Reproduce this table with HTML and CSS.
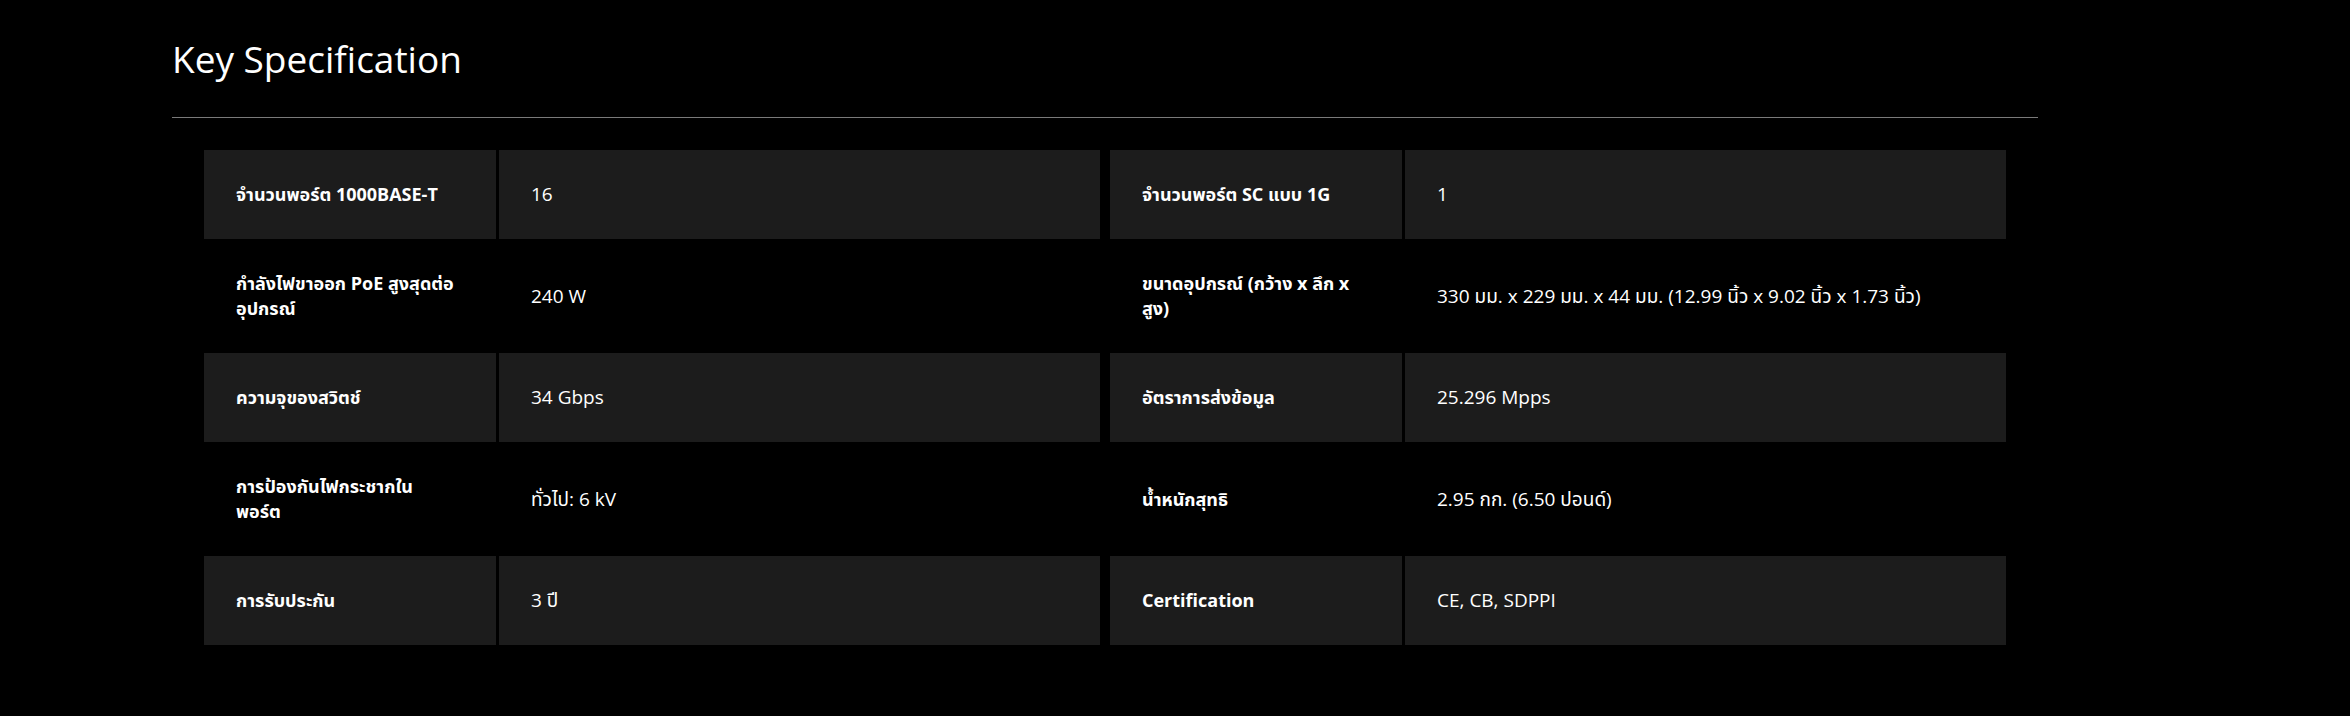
FILE: index.html
```html
<!DOCTYPE html>
<html lang="th">
<head>
<meta charset="utf-8">
<title>Key Specification</title>
<link rel="stylesheet" href="styles.css">
</head>
<body>
<section class="spec">
  <h2 class="spec-title">Key Specification</h2>
  <div class="spec-body">
    <div class="spec-grid">
      <div class="spec-row">
        <div class="pair"><div class="label"><span>จำนวนพอร์ต 1000BASE-T</span></div><div class="value"><span>16</span></div></div>
        <div class="pair"><div class="label"><span>จำนวนพอร์ต SC แบบ 1G</span></div><div class="value"><span>1</span></div></div>
      </div>
      <div class="spec-row">
        <div class="pair"><div class="label"><span>กำลังไฟขาออก PoE สูงสุดต่ออุปกรณ์</span></div><div class="value"><span>240 W</span></div></div>
        <div class="pair"><div class="label"><span>ขนาดอุปกรณ์ (กว้าง x ลึก x สูง)</span></div><div class="value"><span>330 มม. x 229 มม. x 44 มม. (12.99 นิ้ว x 9.02 นิ้ว x 1.73 นิ้ว)</span></div></div>
      </div>
      <div class="spec-row">
        <div class="pair"><div class="label"><span>ความจุของสวิตช์</span></div><div class="value"><span>34 Gbps</span></div></div>
        <div class="pair"><div class="label"><span>อัตราการส่งข้อมูล</span></div><div class="value"><span>25.296 Mpps</span></div></div>
      </div>
      <div class="spec-row">
        <div class="pair"><div class="label"><span>การป้องกันไฟกระชากใน<br>พอร์ต</span></div><div class="value"><span>ทั่วไป: 6 kV</span></div></div>
        <div class="pair"><div class="label"><span>น้ำหนักสุทธิ</span></div><div class="value"><span>2.95 กก. (6.50 ปอนด์)</span></div></div>
      </div>
      <div class="spec-row">
        <div class="pair"><div class="label"><span>การรับประกัน</span></div><div class="value"><span>3 ปี</span></div></div>
        <div class="pair"><div class="label"><span>Certification</span></div><div class="value"><span>CE, CB, SDPPI</span></div></div>
      </div>
    </div>
  </div>
</section>
</body>
</html>
```

FILE: styles.css
```css
html, body {
  margin: 0;
  padding: 0;
  background: #000;
  color: #fff;
  font-family: "Open Sans", "Noto Sans Thai", "Noto Sans", sans-serif;
}

.spec {
  width: 1866px;
  margin-left: 172px;
  padding-top: 37px;
}

.spec-title {
  margin: 0;
  font-size: 37px;
  font-weight: 400;
  line-height: 44px;
  padding-bottom: 36px;
  border-bottom: 1px solid #7a7a7a;
}

.spec-body {
  padding: 32px 32px 0;
}

.spec-grid {
  display: flex;
  flex-direction: column;
}

.spec-row {
  display: grid;
  grid-template-columns: 1fr 1fr;
  column-gap: 10px;
}

.spec-row:nth-child(odd) .label,
.spec-row:nth-child(odd) .value {
  background: #1c1c1c;
}

.pair {
  display: grid;
  grid-template-columns: 292px 1fr;
  column-gap: 3px;
}

.label,
.value {
  padding: 32px;
  font-size: 18px;
  line-height: 25px;
  display: flex;
  align-items: center;
}

.value {
  font-size: 19px;
}

.label {
  font-weight: 700;
}
```
